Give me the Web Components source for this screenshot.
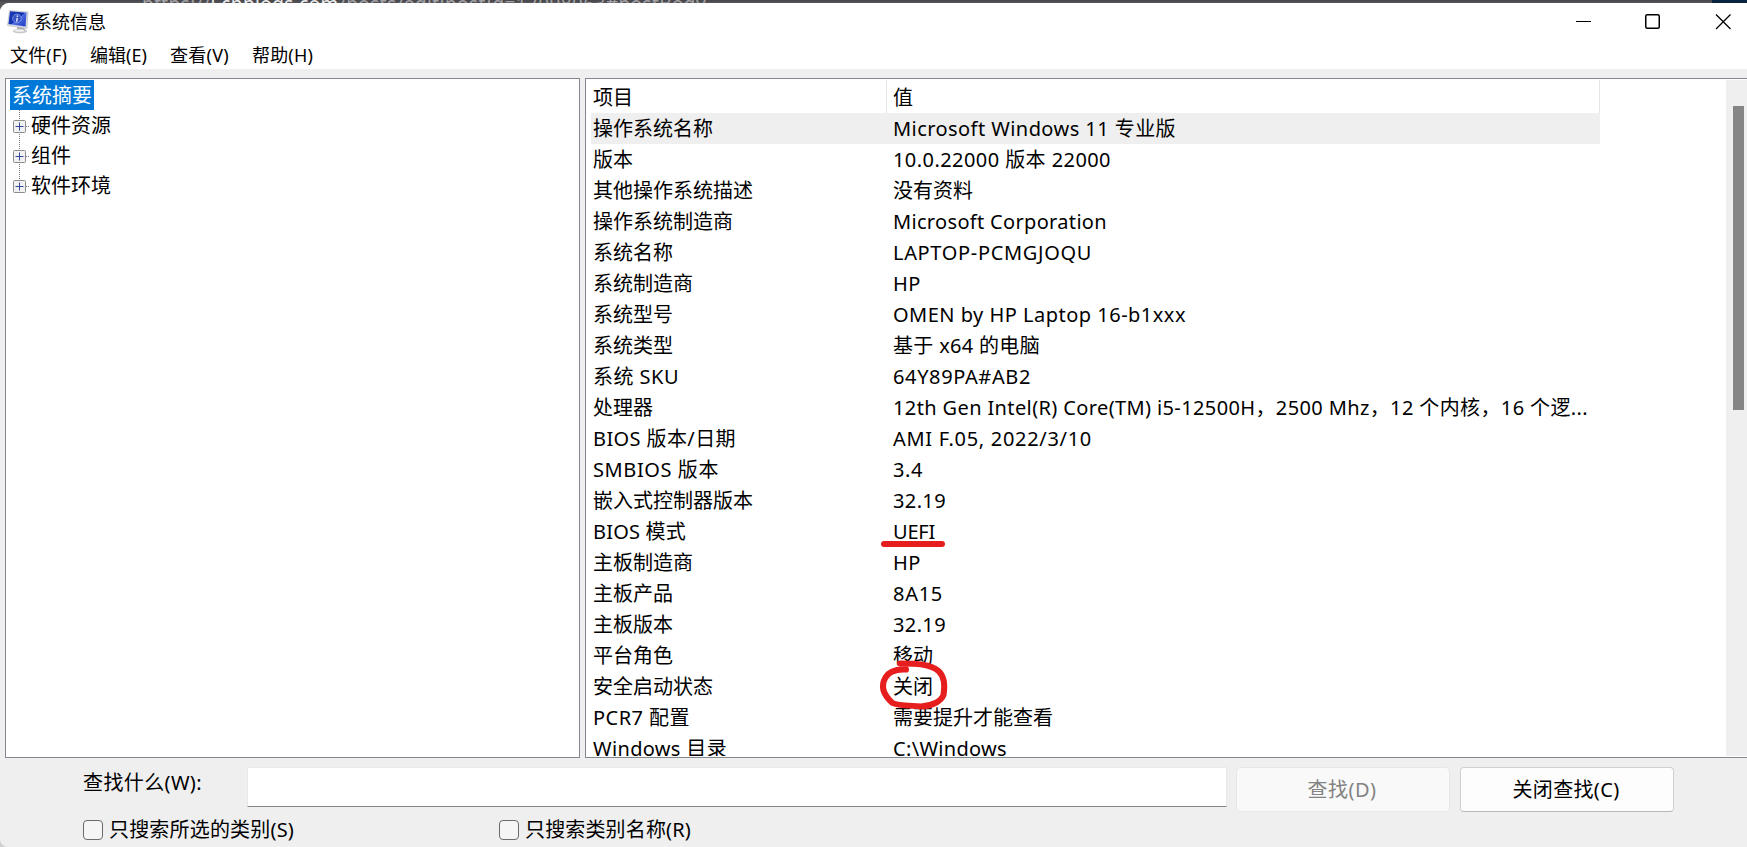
<!DOCTYPE html>
<html lang="zh-CN">
<head>
<meta charset="utf-8">
<title>系统信息</title>
<style>
html,body{margin:0;height:100%;overflow:hidden}
body{font-family:"Noto Sans","Noto Sans CJK SC",sans-serif;font-size:20px;color:#000}
</style>
</head>
<body>
<system-info></system-info>
<script>
const define=(name,html,init)=>customElements.define(name,class extends HTMLElement{
  connectedCallback(){
    if(this.shadowRoot)return;
    const r=this.attachShadow({mode:'open'});
    r.innerHTML=html;
    if(init)init(this,r);
  }
});

/* Inline text tracked out or in so that its run is "w" pixels wide */
define('fit-text','<style>:host{display:inline-block;white-space:pre}</style><slot></slot>',el=>{
  const w=+el.getAttribute('w');
  if(!w)return;
  const n=[...el.textContent].length;
  el.style.letterSpacing=((w-el.getBoundingClientRect().width)/n).toFixed(3)+'px';
});

define('desktop-strip',`<style>
:host{display:flex;height:3px;overflow:hidden;background:linear-gradient(#464549,#57565b);justify-content:space-between;align-items:flex-end;box-sizing:border-box;padding-left:142px}
.url{font-size:19px;line-height:19px;height:8px;color:#a3a2a6}
.url b{font-weight:400;color:#eee}
.end{width:35px;height:3px;background:#0b2540}
</style><div class="url"><fit-text w="564">https://<b>i.cnblogs.com</b>/posts/edit;postId=17098063#postBody</fit-text></div><div class="end"></div>`);

define('app-icon',`<style>:host{display:block;width:22px;height:24px}svg{display:block}</style>
<svg width="22" height="24" viewBox="0 0 22 24">
<defs><linearGradient id="s" x1="0" y1="0" x2="1" y2="1"><stop offset="0" stop-color="#1c3fb4"/><stop offset=".5" stop-color="#1230b0"/><stop offset=".52" stop-color="#4a6be0"/><stop offset="1" stop-color="#2038c8"/></linearGradient></defs>
<ellipse cx="13" cy="21" rx="7" ry="2.3" fill="#c9c9cb"/><path d="M10 16l7 1 1 4-8-1z" fill="#a8a9ad"/><ellipse cx="12.500" cy="20.500" rx="5" ry="1.300" fill="#efeff0"/>
<path d="M2.500 .5L21 2l-1 16.500L.5 15.500z" fill="#d5d8df" stroke="#b6bac4" stroke-width=".6"/>
<path d="M3 1.200L19.500 2.700l-1 13.800L1.500 14z" fill="url(#s)"/>
<circle cx="10" cy="8.500" r="4.300" fill="#3553c4" stroke="#93a6e6" stroke-width=".8"/>
<path d="M10.400 5.500v1.400M10.200 7.900l-.5 3.800" stroke="#e8edff" stroke-width="1.400"/></svg>`);

define('title-bar',`<style>
:host{display:flex;height:36px;align-items:center;padding-left:7px;font-size:18px}
.name{margin-left:5px;flex:1;line-height:38px;height:36px}
app-icon{margin-top:1px}
svg{display:block;margin-right:16px;margin-top:2px}
</style><app-icon></app-icon><span class="name">系统信息</span>
<svg width="155" height="16" viewBox="0 0 155 16" fill="none" stroke="#000">
<path d="M0 7.500h15"/><rect x="69.750" y=".75" width="13.500" height="13.500" rx="1.500" stroke-width="1.500"/><path d="M140 .5l14.500 14.500M154.500 .5L140 15" stroke-width="1.300"/></svg>`);

define('menu-bar',`<style>
:host{display:flex;height:30px;gap:23px;padding-left:10px;font-size:18px;line-height:32px}
</style><fit-text w="57">文件(F)</fit-text><fit-text w="57">编辑(E)</fit-text><fit-text w="59">查看(V)</fit-text><fit-text w="61">帮助(H)</fit-text>`);

define('tree-item',`<style>
:host{display:flex;height:30px;line-height:31px;align-items:center}
.cell{width:18px;height:30px;margin-left:2px;margin-right:1px}
.t{white-space:nowrap;height:30px}
:host([selected]) .cell{display:none}
:host([selected]) .t{background:#0078d7;color:#fff;padding:0 2px}
svg{display:block}
</style><div class="cell"><svg width="18" height="30" viewBox="0 0 18 30"><path d="M7.500 0V30" class="v" stroke="#777" stroke-dasharray="1 1"/><path d="M14 16.500h4" stroke="#777" stroke-dasharray="1 1"/><rect x="1.500" y="10.500" width="12" height="12" rx="1" fill="#f1f1f1" stroke="#8c8c8c"/><path d="M3.500 16.500h8M7.500 12.500v8" stroke="#35489b"/></svg></div><span class="t"><slot></slot></span>`,(el,r)=>{
  if(el.hasAttribute('last'))r.querySelector('.v').setAttribute('d','M7.500 0V12');
});

define('category-tree',`<style>
:host{display:block;box-sizing:border-box;width:575px;border:1px solid #828790;background:#fff;padding:1px 4px}
</style><tree-item selected>系统摘要</tree-item><tree-item>硬件资源</tree-item><tree-item>组件</tree-item><tree-item last>软件环境</tree-item>`);

define('info-row',`<style>
:host{display:grid;grid-template-columns:300px 1fr;height:31px;line-height:31px;width:1008px;white-space:nowrap;padding-left:2px;box-sizing:border-box}
:host([active]){background:#efefef}
.v{position:relative}
svg{position:absolute;overflow:visible;pointer-events:none;z-index:2}
</style><span class="k"></span><span class="v"></span>`,(el,r)=>{
  for(const c of ['k','v']){
    const f=document.createElement('fit-text');
    const w=el.getAttribute(c+'w');
    if(w)f.setAttribute('w',w);
    f.textContent=el.getAttribute(c);
    r.querySelector('.'+c).append(f);
  }
  const ink={
    line:'<svg style="left:-12px;top:23px" width="66" height="8"><path d="M3 5H61" stroke="#e61e1e" stroke-width="6" stroke-linecap="round"/></svg>',
    ring:'<svg style="left:-14px;top:-16px" width="70" height="54" fill="none" stroke="#e61e1e" stroke-width="6" stroke-linecap="round" stroke-linejoin="round"><path d="M27 14.500C18 14 10 16 6.500 22.500C1.500 31 4.500 40 13.500 48C18 50.500 30 50.500 42 51.500C53 51 62 46.500 64.500 40C66 31 65 21 59.500 16C51 9 38 8.500 21 8.500"/></svg>'
  }[el.getAttribute('mark')];
  if(ink)r.querySelector('.v').insertAdjacentHTML('beforeend',ink);
});

const ROWS=[
['操作系统名称',0,'Microsoft Windows 11 专业版',283],
['版本',0,'10.0.22000 版本 22000',218],
['其他操作系统描述',0,'没有资料',0],
['操作系统制造商',0,'Microsoft Corporation',214],
['系统名称',0,'LAPTOP-PCMGJOQU',199],
['系统制造商',0,'HP',28],
['系统型号',0,'OMEN by HP Laptop 16-b1xxx',293],
['系统类型',0,'基于 x64 的电脑',147],
['系统 SKU',86,'64Y89PA#AB2',138],
['处理器',0,'12th Gen Intel(R) Core(TM) i5-12500H，2500 Mhz，12 个内核，16 个逻...',695],
['BIOS 版本/日期',143,'AMI F.05, 2022/3/10',199],
['SMBIOS 版本',126,'3.4',30],
['嵌入式控制器版本',0,'32.19',53],
['BIOS 模式',93,'UEFI',42,'line'],
['主板制造商',0,'HP',28],
['主板产品',0,'8A15',50],
['主板版本',0,'32.19',53],
['平台角色',0,'移动',0],
['安全启动状态',0,'关闭',0,'ring'],
['PCR7 配置',97,'需要提升才能查看',0],
['Windows 目录',134,'C:\\Windows',114]];

define('detail-list',`<style>
:host{display:flex;box-sizing:border-box;flex:1;min-width:0;border:1px solid #828790;border-right:0;background:#fff;padding:1px 0 1px 5px;overflow:hidden}
.list{flex:1;height:676px;overflow:hidden}
.head{display:grid;grid-template-columns:296px 1fr;height:33px;width:1009px;line-height:35px;box-sizing:border-box}
.head span{border-right:1px solid #e5e5e5;padding-left:2px;height:33px;box-sizing:border-box}
.head span+span{padding-left:6px}
.bar{width:21px;background:#efefef;display:flex;box-sizing:border-box;padding:26px 0 0 7px}
.thumb{width:11px;height:304px;background:#858585}
info-row{width:1009px}
</style><div class="list"><div class="head"><span>项目</span><span>值</span></div><div class="rows"></div></div><div class="bar"><div class="thumb"></div></div>`,(el,r)=>{
  ROWS.forEach(([k,kw,v,vw,mark],i)=>{
    const e=document.createElement('info-row');
    const a={k,kw:kw||'',v,vw:vw||''};
    if(mark)a.mark=mark;
    if(!i)a.active='';
    for(const n in a)e.setAttribute(n,a[n]);
    r.querySelector('.rows').append(e);
  });
});

define('check-option',`<style>
:host{display:flex;align-items:center;gap:6px;height:26px;line-height:26px;white-space:nowrap}
.box{box-sizing:border-box;width:20px;height:20px;border:1px solid #6a6a6a;border-radius:4px;background:#f5f5f5}
</style><span class="box"></span><slot></slot>`);

define('push-button',`<style>
:host{display:flex;align-items:center;justify-content:center;box-sizing:border-box;width:214px;height:45px;border:1px solid #d0d0d0;border-bottom-color:#b9b9b9;border-radius:4px;background:#fdfdfd;padding:0 2px 2px 0}
:host([disabled]){color:#838383;background:#f9f9f9;border-color:#e7e7e7}
</style><slot></slot>`);

define('find-panel',`<style>
:host{display:block;height:89px;box-sizing:border-box;padding:9px 0 0 83px;white-space:nowrap}
.q{display:flex;height:45px}
.lab{width:164px;line-height:31px}
.in{box-sizing:border-box;width:980px;height:40px;background:#fff;border:1px solid #e9e9e9;border-bottom-color:#858585;margin-right:9px}
push-button+push-button{margin-left:10px}
.o{display:flex;padding-top:5px}
check-option:first-child{width:416px}
</style><div class="q"><div class="lab"><fit-text w="119">查找什么(W):</fit-text></div><div class="in"></div>
<push-button disabled><fit-text w="69">查找(D)</fit-text></push-button><push-button><fit-text w="107">关闭查找(C)</fit-text></push-button></div>
<div class="o"><check-option><fit-text w="185">只搜索所选的类别(S)</fit-text></check-option><check-option><fit-text w="166">只搜索类别名称(R)</fit-text></check-option></div>`);

define('system-info',`<style>
:host{display:block;width:1747px;height:847px;background:linear-gradient(#57565b 0 20px,#d0d0d0 21px);overflow:hidden}
.win{height:844px;background:#efefef;border-radius:9px 0 0 8px;overflow:hidden}
.top{background:#fff;height:66px}
.main{display:flex;height:680px;padding:9px 0 0 5px;gap:5px}
</style><desktop-strip></desktop-strip><div class="win"><div class="top"><title-bar></title-bar><menu-bar></menu-bar></div>
<div class="main"><category-tree></category-tree><detail-list></detail-list></div><find-panel></find-panel></div>`);
</script>
</body>
</html>
